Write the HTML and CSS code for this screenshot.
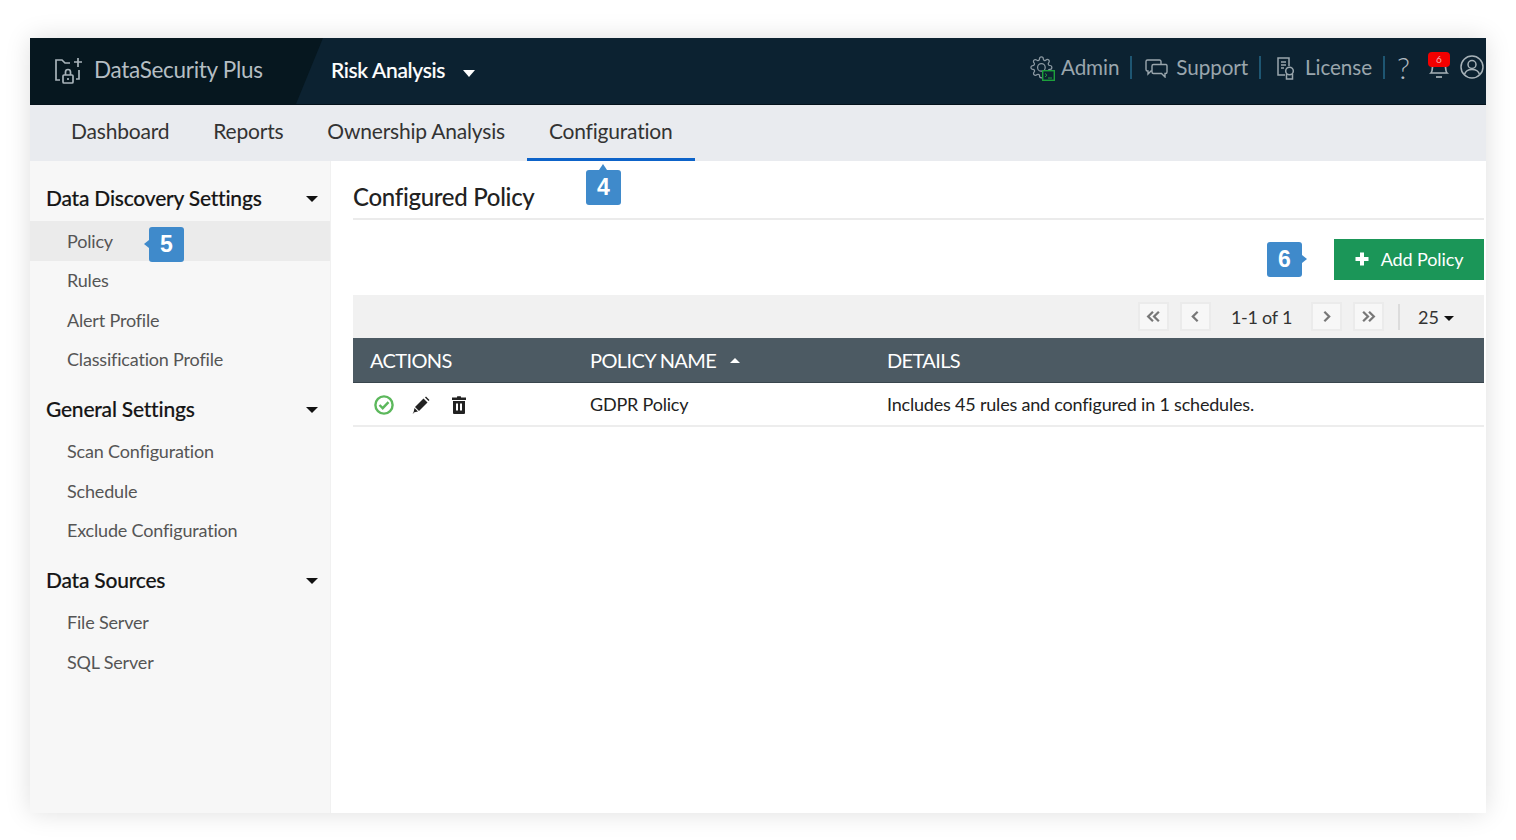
FILE: index.html
```html
<!DOCTYPE html>
<html lang="en">
<head>
<meta charset="utf-8">
<title>DataSecurity Plus</title>
<link rel="stylesheet" href="styles.css">
</head>
<body>
<div class="window">
  <header class="topbar">
    <div class="brand">
      <svg class="brand-icon" viewBox="0 0 30 30" fill="none" stroke="#a9b4ba" stroke-width="1.7"><path d="M6 24H2V4h6l3 3h5"/><rect x="9" y="19" width="10" height="8" rx="1"/><path d="M11.500 19v-3a2.500 2.500 0 0 1 5 0v3"/><path d="M14 24v-2"/><path d="M24 2v9M20 6h8M25 14v9h-3"/></svg>
      <span class="brand-name">DataSecurity Plus</span>
    </div>
    <div class="module">
      <span class="module-name">Risk Analysis</span>
      <span class="caret caret-white"></span>
    </div>
    <div class="top-links">
      <span class="top-link">
        <svg class="ico-admin" viewBox="0 0 25 25" fill="none"><g transform="scale(.95)"><path stroke="#8d9aa3" stroke-width="1.300" d="M19.400 15a1.650 1.650 0 0 0 .33 1.820l.06.06a2 2 0 0 1 0 2.830 2 2 0 0 1-2.830 0l-.06-.06a1.650 1.650 0 0 0-1.820-.33 1.650 1.650 0 0 0-1 1.510V21a2 2 0 0 1-2 2 2 2 0 0 1-2-2v-.09A1.650 1.650 0 0 0 9 19.400a1.650 1.650 0 0 0-1.820.33l-.06.06a2 2 0 0 1-2.830 0 2 2 0 0 1 0-2.830l.06-.06a1.650 1.650 0 0 0 .33-1.820 1.650 1.650 0 0 0-1.510-1H3a2 2 0 0 1-2-2 2 2 0 0 1 2-2h.09A1.650 1.650 0 0 0 4.600 9a1.650 1.650 0 0 0-.33-1.820l-.06-.06a2 2 0 0 1 0-2.830 2 2 0 0 1 2.830 0l.06.06a1.650 1.650 0 0 0 1.820.33H9a1.650 1.650 0 0 0 1-1.510V3a2 2 0 0 1 2-2 2 2 0 0 1 2 2v.09a1.650 1.650 0 0 0 1 1.510 1.650 1.650 0 0 0 1.820-.33l.06-.06a2 2 0 0 1 2.830 0 2 2 0 0 1 0 2.830l-.06.06a1.650 1.650 0 0 0-.33 1.820V9a1.650 1.650 0 0 0 1.510 1H21a2 2 0 0 1 2 2 2 2 0 0 1-2 2h-.09a1.650 1.650 0 0 0-1.510 1z"/><circle cx="12" cy="12" r="4" stroke="#8d9aa3" stroke-width="1.300"/></g><rect x="12.700" y="14.700" width="11.600" height="9.600" fill="#0c2231" stroke="#1da03c" stroke-width="1.400"/><path d="M15 17.500l2 1.700-2 1.700M18 22h4" stroke="#1da03c" stroke-width="1"/></svg>
        Admin
      </span>
      <span class="divider"></span>
      <span class="top-link">
        <svg class="ico-support" viewBox="0 0 23 19" fill="none" stroke="#9aa6ad" stroke-width="1.400"><path d="M16 5V2.500A1.500 1.500 0 0 0 14.500 1h-12A1.500 1.500 0 0 0 1 2.500v8A1.500 1.500 0 0 0 2.500 12H3v3l3-3h1"/><path d="M8.500 5.500h12.500A1.500 1.500 0 0 1 22 7v6a1.500 1.500 0 0 1-1.500 1.500H20V18l-3.500-3.500h-8A1.500 1.500 0 0 1 7 13V7a1.500 1.500 0 0 1 1.500-1.500z"/></svg>
        Support
      </span>
      <span class="divider"></span>
      <span class="top-link">
        <svg class="ico-license" viewBox="0 0 18 23" fill="none" stroke="#9aa6ad" stroke-width="1.500"><path d="M8 18H1V1h11v8"/><path d="M4 5h5M4 8h5M4 11h3"/><circle cx="12.500" cy="14" r="3.800"/><path d="M9.500 17v5h6v-5"/></svg>
        License
      </span>
      <span class="divider"></span>
      <span class="help">?</span>
      <span class="bell">
        <svg class="ico-bell" viewBox="0 0 22 26" fill="none" stroke="#a7b2b8" stroke-width="1.700"><path d="M3 19c2-2 1-6 2-10 1-2 3-4 6-4s5 2 6 4c1 4 0 8 2 10z"/><path d="M8 23h6"/></svg>
        <span class="bell-count">6</span>
      </span>
      <svg class="ico-user" viewBox="0 0 24 24" fill="none" stroke="#a7b2b8" stroke-width="1.500"><circle cx="12" cy="12" r="11"/><circle cx="12" cy="9.500" r="4"/><path d="M4.500 19.500c1-4 4-5 7.500-5s6.500 1 7.500 5"/></svg>
    </div>
  </header>

  <nav class="tabs">
    <a class="tab">Dashboard</a>
    <a class="tab">Reports</a>
    <a class="tab">Ownership Analysis</a>
    <a class="tab tab-active">Configuration<span class="badge badge-up">4</span></a>
  </nav>

  <div class="body">
    <aside class="sidebar">
      <section class="side-group">
        <h3 class="side-title">Data Discovery Settings<span class="caret caret-dark"></span></h3>
        <a class="side-item side-selected">Policy<span class="badge badge-left">5</span></a>
        <a class="side-item">Rules</a>
        <a class="side-item">Alert Profile</a>
        <a class="side-item">Classification Profile</a>
      </section>
      <section class="side-group">
        <h3 class="side-title">General Settings<span class="caret caret-dark"></span></h3>
        <a class="side-item">Scan Configuration</a>
        <a class="side-item">Schedule</a>
        <a class="side-item">Exclude Configuration</a>
      </section>
      <section class="side-group">
        <h3 class="side-title">Data Sources<span class="caret caret-dark"></span></h3>
        <a class="side-item">File Server</a>
        <a class="side-item">SQL Server</a>
      </section>
    </aside>

    <main class="content">
      <h2 class="page-title">Configured Policy</h2>
      <div class="toolbar">
        <span class="add-wrap">
          <span class="badge badge-right">6</span>
          <button class="add-btn"><span class="plus">
            <svg viewBox="0 0 14 14" class="ico-plus"><path d="M5 .5h4V5h4.500v4H9v4.500H5V9H.5V5H5z" fill="#fff"/></svg>
          </span>Add Policy</button>
        </span>
      </div>
      <div class="pager">
        <span class="page-btn"><svg viewBox="0 0 14 12" class="pg" fill="none"><path d="M6.500 1.500L2 6l4.500 4.500M12 1.500L7.500 6l4.500 4.500"/></svg></span>
        <span class="page-btn"><svg viewBox="0 0 14 12" class="pg" fill="none"><path d="M9 1.500L4.500 6 9 10.500"/></svg></span>
        <span class="page-range">1-1 of 1</span>
        <span class="page-btn"><svg viewBox="0 0 14 12" class="pg" fill="none"><path d="M5 1.500L9.500 6 5 10.500"/></svg></span>
        <span class="page-btn"><svg viewBox="0 0 14 12" class="pg" fill="none"><path d="M2 1.500L6.500 6 2 10.500M7.500 1.500L12 6l-4.500 4.500"/></svg></span>
        <span class="pager-sep"></span>
        <span class="page-size">25<span class="caret caret-small"></span></span>
      </div>
      <div class="table">
        <div class="row row-head">
          <span class="col-actions">ACTIONS</span>
          <span class="col-name">POLICY NAME<span class="sort-up"></span></span>
          <span class="col-details">DETAILS</span>
        </div>
        <div class="row row-data">
          <span class="col-actions actions">
            <svg class="ico-check" viewBox="0 0 20 20" fill="none" stroke="#5cb85c" stroke-width="2.400"><circle cx="10" cy="10" r="8.600"/><path d="M5.500 10l3.200 3.200 5.800-6"/></svg>
            <svg class="ico-edit" viewBox="0 0 18 18" fill="#222"><path d="M11.500 2.500l4 4-8.500 8.500-4-4z"/><path d="M13 1.500l1-1 3.500 3.500-1 1zM2.500 12l3.500 3.500-4.500 1zM.5 17.500l1.200-1.200.6.600z"/></svg>
            <svg class="ico-trash" viewBox="0 0 14 18"><path d="M5 .5C5 0 9 0 9 .5V1.500h5V4H0V1.500h5zM1 5h12v12a1 1 0 0 1-1 1H2a1 1 0 0 1-1-1zm3 2.500v7h2v-7zm4 0v7h2v-7z" fill="#222" fill-rule="evenodd"/></svg>
          </span>
          <span class="col-name">GDPR Policy</span>
          <span class="col-details">Includes 45 rules and configured in 1 schedules.</span>
        </div>
      </div>
    </main>
  </div>
</div>
</body>
</html>
```

FILE: styles.css
```css
* { box-sizing: border-box; }
html, body { height: 100%; }
body {
  margin: 0;
  padding: 38px 30px 27px;
  background: #fff;
  font-family: Lato, "Open Sans", sans-serif;
  color: #222;
  overflow: hidden;
}
.window {
  height: 775px;
  display: flex;
  flex-direction: column;
  background: #fff;
  box-shadow: 0 0 24px rgba(0, 0, 0, 0.13);
}
.topbar {
  height: 67px;
  flex: none;
  display: flex;
  align-items: center;
  background: #0c2231;
  border-bottom: 1px solid #04121b;
}
.brand {
  position: relative;
  width: 301px;
  height: 100%;
  flex: none;
  display: flex;
  align-items: center;
  gap: 10px;
  padding-left: 24px;
  padding-bottom: 4px;
  background: linear-gradient(to right, #06171f 266px, transparent 266px);
}
.brand::after {
  content: "";
  position: absolute;
  left: 266px;
  top: 0;
  width: 27px;
  height: 100%;
  background: #06171f;
  clip-path: polygon(0 0, 100% 0, 0 100%);
}
.brand-icon { width: 30px; height: 30px; margin-top: 4px; }
.brand-name { font-size: 22.500px; color: #b5bec3; letter-spacing: -0.3px; }
.module { display: flex; align-items: center; gap: 18px; padding-bottom: 4px; }
.module-name { font-size: 21px; color: #fff; font-weight: 500; letter-spacing: -0.33px; -webkit-text-stroke: 0.15px #fff; }
.caret {
  display: inline-block;
  width: 0;
  height: 0;
  border-style: solid;
  border-color: transparent;
}
.caret-white { border-width: 7px 6.5px 0; border-top-color: #fff; margin-top: 8px; }
.top-links {
  margin-left: auto;
  display: flex;
  align-items: center;
  height: 100%;
  padding-bottom: 8px;
  color: #9aa6ad;
  font-size: 20.700px;
}
.top-link { display: flex; align-items: center; letter-spacing: -0.1px; }
.ico-admin { width: 25px; height: 25px; margin: 3px 6px 0 0; }
.ico-support { width: 23px; height: 19px; margin: 3px 8px 0 0; }
.ico-license { width: 18px; height: 23px; margin: 2px 10px 0 3px; }
.divider { width: 2px; height: 23px; background: #1e5672; margin: 0 13px 0 11px; }
.help { font-size: 30px; line-height: 30px; font-weight: 300; color: #b3bcc2; width: 16px; margin: 0 15px 0 -1px; }
.bell { position: relative; width: 22px; height: 26px; margin-right: 10px; margin-top: 0; display: block; }
.ico-bell { width: 22px; height: 26px; display: block; }
.bell-count {
  position: absolute;
  left: 0;
  top: -2px;
  width: 22px;
  height: 15px;
  border-radius: 4px;
  background: #f40000;
  color: #f3b3b3;
  font-size: 10px;
  line-height: 15px;
  text-align: center;
}
.ico-user { width: 24px; height: 24px; flex: none; margin-right: 2px; }

.tabs {
  height: 56px;
  flex: none;
  display: flex;
  padding-left: 19px;
  background: #e9ebef;
  font-size: 21px;
  color: #333;
}
.tab {
  position: relative;
  padding: 13px 22px 0;
  letter-spacing: -0.2px;
  white-space: nowrap;
}
.tab-active { border-bottom: 3px solid #0d63c9; }

.badge {
  position: absolute;
  width: 35px;
  height: 35px;
  border-radius: 3px;
  background: #3f8acb;
  color: #fff;
  font: 700 23px/35px "Liberation Sans", Arial, sans-serif;
  text-align: center;
  letter-spacing: 0;
}
.badge::before {
  content: "";
  position: absolute;
  width: 0;
  height: 0;
  border: 5px solid transparent;
}
.badge-up { left: 59px; top: 65px; }
.badge-up::before { left: 13px; top: -6px; border-top-width: 0; border-bottom: 6px solid #3f8acb; border-left-width: 4.500px; border-right-width: 4.500px; }
.badge-left { left: 119px; top: 6px; }
.badge-left::before { left: -5px; top: 13px; border-left-width: 0; border-right-color: #3f8acb; border-top-width: 4.500px; border-bottom-width: 4.500px; }
.badge-right { left: -67px; top: 3px; }
.badge-right::before { right: -5px; top: 13px; border-right-width: 0; border-left-color: #3f8acb; border-top-width: 4.500px; border-bottom-width: 4.500px; }

.body { flex: 1; display: flex; min-height: 0; }
.sidebar {
  width: 301px;
  flex: none;
  padding-top: 19px;
  background: #f7f7f7;
  border-right: 1px solid #f1f1f1;
}
.side-group { margin-bottom: 11.500px; }
.side-title {
  margin: 0;
  height: 41px;
  padding: 4px 12px 0 16px;
  display: flex;
  justify-content: space-between;
  align-items: flex-start;
  font-size: 21px;
  line-height: 28px;
  font-weight: 500;
  color: #151515;
  letter-spacing: -0.22px;
  -webkit-text-stroke: 0.15px #151515;
}
.caret-dark { border-width: 6px 6px 0; border-top-color: #111; margin-top: 12px; }
.side-item {
  position: relative;
  display: block;
  height: 39.500px;
  padding: 6.500px 0 0 37px;
  font-size: 18px;
  line-height: 27px;
  color: #555;
  letter-spacing: -0.18px;
}
.side-selected { background: #ebebeb; width: 300px; }

.content { flex: 1; padding: 0 2px 0 22px; min-width: 0; }
.page-title {
  margin: 0;
  height: 59px;
  padding-top: 19px;
  font-size: 24px;
  line-height: 34px;
  font-weight: 500;
  color: #222;
  border-bottom: 2px solid #ebebeb;
  letter-spacing: -0.3px;
}
.toolbar {
  height: 75px;
  padding-top: 19px;
  display: flex;
  justify-content: flex-end;
}
.add-wrap { position: relative; height: 41px; }
.add-btn {
  width: 150px;
  height: 41px;
  display: flex;
  align-items: center;
  justify-content: center;
  gap: 12px;
  padding: 0 0 2px;
  border: 0;
  background: #1b9658;
  color: #fff;
  font: 18px Lato, sans-serif;
  letter-spacing: -0.1px;
}
.plus { display: flex; }
.ico-plus { width: 14px; height: 14px; display: block; }

.pager {
  height: 43px;
  display: flex;
  align-items: center;
  justify-content: flex-end;
  padding-right: 30px;
  background: #f1f1f1;
  font-size: 18px;
  color: #333;
}
.page-btn {
  width: 31px;
  height: 29px;
  display: flex;
  align-items: center;
  justify-content: center;
  background: #f7f7f7;
  border: 2px solid #ebebeb;
  margin-right: 11px;
}
.page-range { margin: 0 19px 0 9px; letter-spacing: -0.25px; }
.pg { width: 15px; height: 13px; stroke: #777; stroke-width: 2.100; }
.pager-sep { width: 2px; height: 26px; background: #dcdcdc; margin: 0 18px 0 3px; }
.page-size { display: flex; align-items: center; gap: 5px; }
.caret-small { border-width: 5px 5.500px 0; border-top-color: #111; margin-top: 3px; }

.row { display: flex; align-items: center; }
.row-head {
  height: 45px;
  background: #4c5a63;
  color: #fff;
  font-size: 20px;
  letter-spacing: -0.62px;
  border-bottom: 1px solid #39454d;
}
.row-data {
  height: 44px;
  font-size: 18px;
  color: #222;
  letter-spacing: -0.2px;
  border-bottom: 2px solid #ededed;
}
.col-actions { width: 237px; padding-left: 17px; flex: none; }
.col-name { width: 297px; flex: none; display: flex; align-items: center; }
.col-details { flex: 1; }
.sort-up {
  width: 0;
  height: 0;
  margin-left: 14px;
  border: 5px solid transparent;
  border-top-width: 0;
  border-bottom: 5px solid #fff;
}
.actions { display: flex; align-items: center; padding-left: 21px; padding-top: 1px; }
.ico-check { width: 20px; height: 20px; }
.ico-edit { width: 18px; height: 18px; margin-left: 18px; }
.ico-trash { width: 14px; height: 18px; margin-left: 22px; }
```
